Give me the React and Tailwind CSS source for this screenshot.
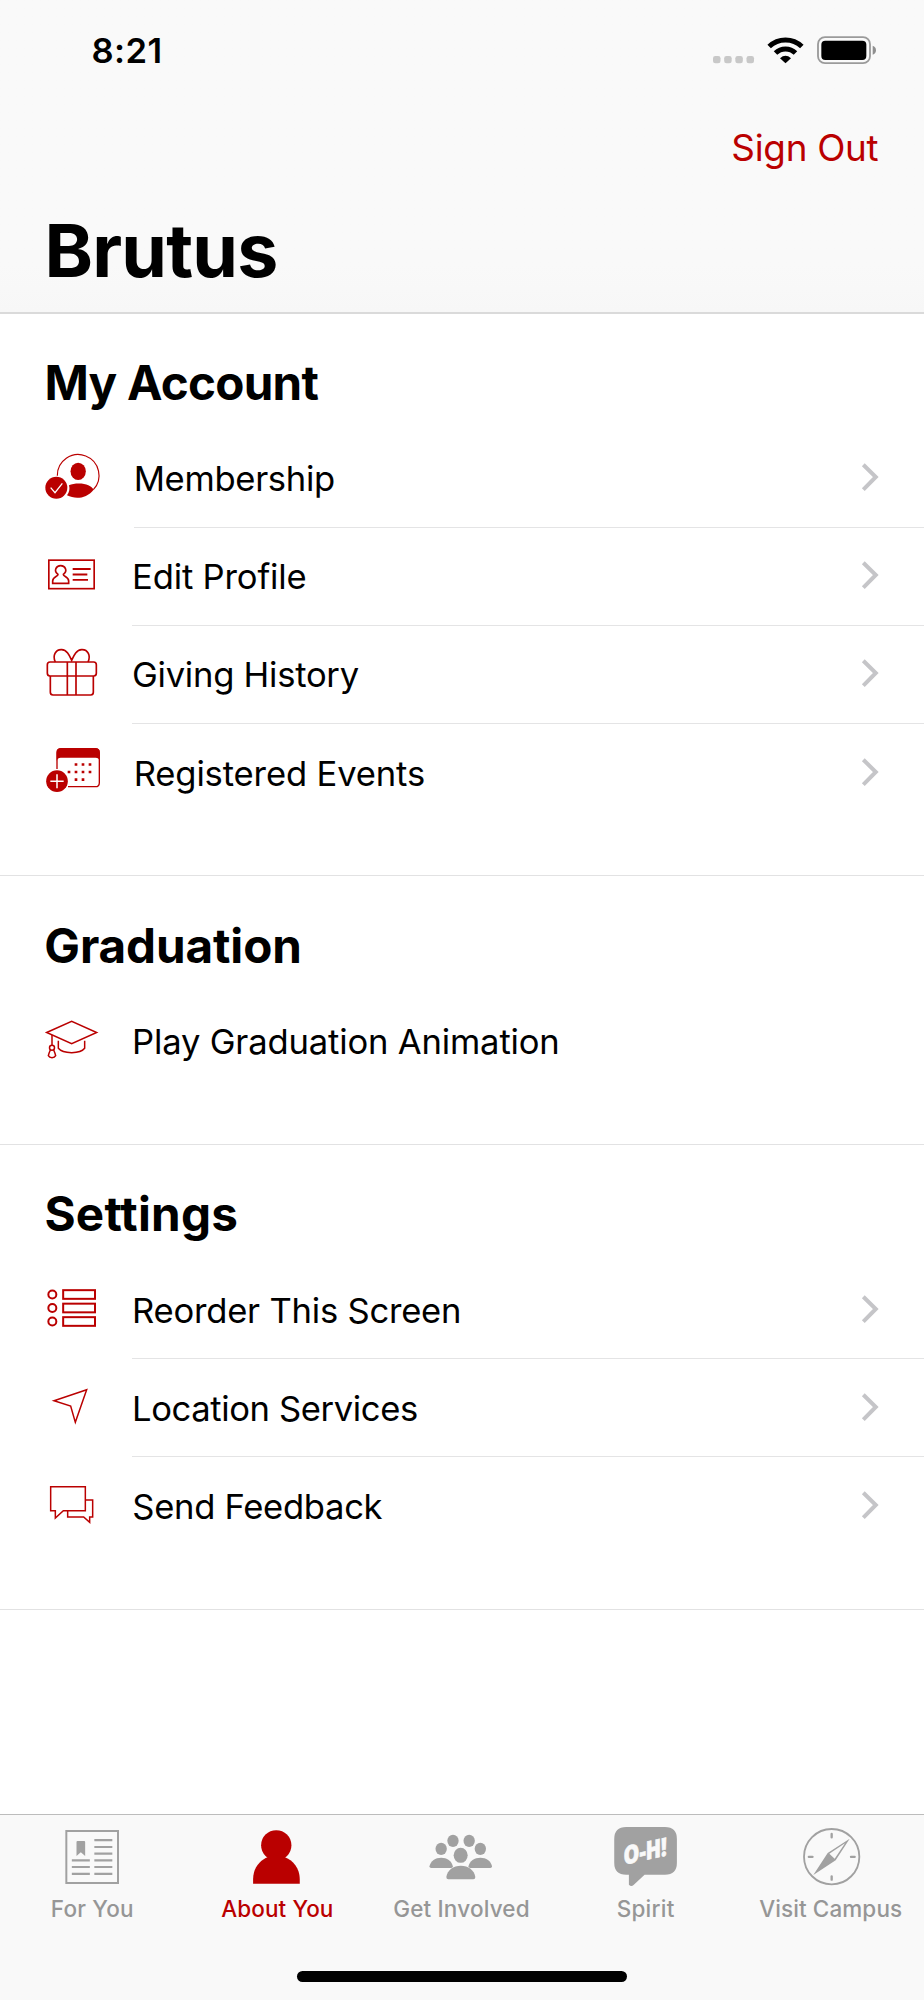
const RED = "#ba0000";
const GRAY = "#a1a1a1";

function RowIcon({ top, children }) {
  return (
    <svg
      className="mt-px ml-[40px] h-[66px] w-[70px] shrink-0"
      viewBox={`30 ${top} 210 198`}
      fill="none"
      stroke={RED}
      strokeWidth="4.500"
    >
      {children}
    </svg>
  );
}

const MembershipIcon = () => (
  <RowIcon top={18}>
    <path d="M82 107A62.500 62.500 0 1 1 190 149" strokeWidth="3.500" />
    <ellipse cx="144.500" cy="94" rx="23" ry="26" fill={RED} stroke="none" />
    <path d="M117 136c14-7 43-8 58 0 8 4 13 8 16 13-22 27-54 30-80 17 7-9 9-19 6-30Z" fill={RED} stroke="none" />
    <circle cx="79" cy="143.500" r="33" fill={RED} stroke="none" />
    <path d="M62 143l13 15 22-28" stroke="#fff" strokeWidth="4" />
  </RowIcon>
);

const ProfileIcon = () => (
  <RowIcon top={312}>
    <rect x="56.500" y="360.500" width="136" height="85.500" strokeWidth="5" />
    <path d="M84 403c1 7-16 7-16 20v7h48v-7c0-13-17-13-16-20 14-10 6-26-8-26s-22 16-8 26Z" strokeWidth="5" />
    <path d="M128 387h54M128 403.500h44M128 419.500h46" strokeWidth="5.500" />
  </RowIcon>
);

const GiftIcon = () => (
  <RowIcon top={37}>
    <g strokeWidth="5">
      <path d="M60 97h131q8 0 8 8v26q0 8-8 8H60q-8 0-8-8v-26q0-8 8-8Z" />
      <path d="M61 139v49q0 8 8 8h113q8 0 8-8v-49M112 97v99M138 97v99" />
      <path d="M76 97c-9-18 0-38 19-37 16 1 23 17 30 32 7-15 14-31 30-32 19-1 28 19 19 37" />
    </g>
  </RowIcon>
);

const EventsIcon = () => (
  <RowIcon top={332}>
    <path d="M81 419V370q0-12 12-12h103q12 0 12 12v90q0 12-12 12h-82" strokeWidth="4" />
    <path d="M80 394V370q0-13 13-13h103q13 0 13 13v24q-3-9-12-9H92q-9 0-12 9Z" fill={RED} stroke="none" />
    <path
      d="M134 405.500h8M155 405.500h8M176 405.500h8M113 428h8M134 428h8M155 428h8M176 428h8M134 451h8M155 451h8"
      strokeWidth="8"
    />
    <circle cx="81" cy="455.500" r="32.500" fill={RED} stroke="none" />
    <path d="M61 456h40M81 435v42" stroke="#fff" strokeWidth="4.500" />
  </RowIcon>
);

const GraduationIcon = () => (
  <RowIcon top={24}>
    <path d="M50 97.500L125 64l75 33.500L125 131Z" />
    <path d="M85 122v23c14 17 65 18 79 0v-23M66 105v31" />
    <circle cx="66" cy="143.500" r="7.500" />
    <path d="M61 150q-4 9-6 17c4 8 18 8 22 0q-2-8-6-17" />
  </RowIcon>
);

const ReorderIcon = () => (
  <RowIcon top={21}>
    <g strokeWidth="6">
      <circle cx="67" cy="73.500" r="12" />
      <circle cx="67" cy="114" r="12" />
      <circle cx="67" cy="154.500" r="12" />
      <rect x="99.500" y="60.500" width="95.500" height="26" />
      <rect x="99.500" y="101" width="95.500" height="26" />
      <rect x="99.500" y="141.500" width="95.500" height="26" />
    </g>
  </RowIcon>
);

const LocationIcon = () => (
  <RowIcon top={317}>
    <path d="M170 361L72 394l50 16 14 49Z" />
  </RowIcon>
);

const FeedbackIcon = () => (
  <RowIcon top={611}>
    <path d="M62 652h104v72h-66l-24 22v-22H62Z" />
    <path d="M166 692h22v51h-9v16l-18-16h-48v-19" />
  </RowIcon>
);

const ChevronIcon = ({ raised }) => (
  <svg
    className={`ml-auto mr-[44px] h-[30px] w-[20px] shrink-0 ${raised ? "mb-[2px]" : ""}`}
    viewBox="0 0 20 30"
    fill="none"
  >
    <path d="M3.300 1.700L15.800 14 3.300 26.600" stroke="#c5c5c8" strokeWidth="4" />
  </svg>
);

const SECTIONS = [
  {
    title: "My Account",
    size: "h-[562px]",
    pad: "pt-[39px]",
    spacing: "ml-[44.500px] tracking-[-0.75px]",
    rows: [
      { label: "Membership", Icon: MembershipIcon, spacing: "ml-[23.700px] tracking-[-0.31px]", chevron: true, raised: true },
      { label: "Edit Profile", Icon: ProfileIcon, spacing: "ml-[22px] tracking-[-0.15px]", chevron: true, raised: true },
      { label: "Giving History", Icon: GiftIcon, spacing: "ml-[22px] tracking-[-0.25px]", chevron: true, raised: true },
      { label: "Registered Events", Icon: EventsIcon, spacing: "ml-[23.700px] tracking-[-0.14px]", chevron: true },
    ],
  },
  {
    title: "Graduation",
    size: "h-[269px]",
    pad: "pt-[40px]",
    spacing: "ml-[44.300px] tracking-[-0.1px]",
    rows: [
      { label: "Play Graduation Animation", Icon: GraduationIcon, spacing: "ml-[22px] tracking-[-0.16px]" },
    ],
  },
  {
    title: "Settings",
    size: "h-[465px]",
    pad: "pt-[39px]",
    spacing: "ml-[44.500px] tracking-[0.2px]",
    rows: [
      { label: "Reorder This Screen", Icon: ReorderIcon, spacing: "ml-[22px] tracking-[-0.22px]", chevron: true },
      { label: "Location Services", Icon: LocationIcon, spacing: "ml-[22px] tracking-[-0.38px]", chevron: true },
      { label: "Send Feedback", Icon: FeedbackIcon, spacing: "ml-[22.300px] tracking-[-0.3px]", chevron: true },
    ],
  },
];

function Row({ row, divider }) {
  const { label, Icon, spacing, chevron, raised } = row;
  return (
    <li>
      <div className="flex h-[97px] items-center">
        <Icon />
        <span
          className={`whitespace-nowrap text-[34.6px] leading-[44px] ${raised ? "pb-[2px]" : ""} ${spacing}`}
        >
          {label}
        </span>
        {chevron && <ChevronIcon raised={raised} />}
      </div>
      <div className={`h-px ${divider}`} />
    </li>
  );
}

function dividerFor(rows, i) {
  if (i === rows.length - 1) return "";
  return rows[i].Icon === MembershipIcon ? "ml-[134px] bg-[#e4e4e5]" : "ml-[132px] bg-[#e4e4e5]";
}

function Section({ section }) {
  return (
    <section className={`border-b border-[#e2e2e3] ${section.size}`}>
      <div className={`h-[116px] ${section.pad}`}>
        <h2 className={`text-[47.6px] leading-[60px] font-bold ${section.spacing}`}>{section.title}</h2>
      </div>
      <ul>
        {section.rows.map((row, i) => (
          <Row key={row.label} row={row} divider={dividerFor(section.rows, i)} />
        ))}
      </ul>
    </section>
  );
}

const StatusIcons = () => (
  <svg className="h-[36px] w-[170px]" viewBox="740 96 510 108">
    <g fill="#c8c8c8">
      <rect x="752" y="168" width="22.500" height="22" rx="7" />
      <rect x="785.500" y="168" width="22.500" height="22" rx="7" />
      <rect x="819" y="168" width="22.500" height="22" rx="7" />
      <rect x="852.500" y="168" width="22.500" height="22" rx="7" />
    </g>
    <g fill="none" stroke="#000">
      <path d="M920.500 139.500A70.500 70.500 0 0 1 1018.500 139.500" strokeWidth="15" />
      <path d="M939.500 159A43 43 0 0 1 999.500 159" strokeWidth="15" />
    </g>
    <path d="M953 174.500Q969.500 160 986 174.500L969.500 190Z" />
    <rect x="1067" y="111.500" width="156" height="78" rx="21" fill="none" stroke="#9a9a9a" strokeWidth="5.500" />
    <rect x="1077" y="122.500" width="135" height="57.500" rx="12" />
    <path d="M1231 137.500q10 4 10 13.500t-10 13.500Z" fill="#8f8f8f" />
  </svg>
);

function TabIcon({ viewBox, children }) {
  return (
    <svg className="h-[72px] w-[80px]" viewBox={viewBox}>
      {children}
    </svg>
  );
}

const NewsIcon = () => (
  <TabIcon viewBox="157 60 240 216">
    <rect x="200" y="93" width="155" height="156" fill="none" stroke={GRAY} strokeWidth="6" />
    <path
      d="M284 120.500h54M284 141h54M284 161h54M284 181h54M284 201h54M284 221.500h54M216.500 181h54M216.500 201h54M216.500 221.500h54"
      stroke={GRAY}
      strokeWidth="6.500"
    />
    <path d="M230.500 126q0-3 3-3h20q3 0 3 3v42l-13-11-13 11Z" fill={GRAY} />
  </TabIcon>
);

const PersonIcon = () => (
  <TabIcon viewBox="710.700 60 240 216">
    <g fill={RED}>
      <circle cx="828.500" cy="136" r="45.500" />
      <path d="M804 171h49c26 10 46 34 46 66v14H759v-14c0-32 19-56 45-66Z" />
    </g>
  </TabIcon>
);

const GroupIcon = () => (
  <TabIcon viewBox="334.500 60 240 216">
    <g fill={GRAY}>
      <ellipse cx="430.500" cy="122.500" rx="17" ry="18.500" />
      <ellipse cx="479" cy="122.500" rx="17" ry="18.500" />
      <ellipse cx="395" cy="146.500" rx="17" ry="18.500" />
      <ellipse cx="512.500" cy="146.500" rx="17" ry="18.500" />
      <ellipse cx="453.500" cy="166" rx="21" ry="22.500" />
      <path d="M360 199c3-16 18-26 35-26s32 10 35 26q0 5-5 5h-60q-5 0-5-5Z" />
      <path d="M477 199c3-16 18-26 35.500-26s32 10 35 26q0 5-5 5h-60q-5.500 0-5.500-5Z" />
      <path
        d="M410.500 231c3-20 21-33.500 43.500-33.500s40 13.500 43.500 33.500q0 7-6 7h-75q-6 0-6-7Z"
      />
    </g>
  </TabIcon>
);

const SpiritIcon = () => (
  <TabIcon viewBox="-23.700 60 240 216">
    <path
      d="M37 81H153q36 0 36 36v71q0 36-36 36H92L59 255q-7 6-14-1V224H37Q1 224 1 188V117Q1 81 37 81Z"
      fill={GRAY}
    />
    <text
      transform="translate(29 195) skewY(-12.5)"
      fontSize="76"
      fontWeight="800"
      textLength="130"
      lengthAdjust="spacingAndGlyphs"
      fill="#f9f9f9"
      stroke="#f9f9f9"
      strokeWidth="2"
      className="font-['Open_Sans']"
    >
      O-H!
    </text>
  </TabIcon>
);

const CompassIcon = () => (
  <TabIcon viewBox="530 60 240 216">
    <circle cx="652" cy="170" r="83" fill="none" stroke={GRAY} strokeWidth="5.500" />
    <path
      d="M652 102v10M652 229v10M583.500 170.500h11M710 170.500h11"
      stroke={GRAY}
      strokeWidth="7"
      strokeLinecap="round"
    />
    <path
      fillRule="evenodd"
      d="M706 116L664 181 597 225 640 159ZM692 130L645 161 661 176Z"
      fill={GRAY}
    />
  </TabIcon>
);

const TABS = [
  { label: "For You", Icon: NewsIcon, spacing: "tracking-[0.21px] text-[#969696]" },
  { label: "About You", Icon: PersonIcon, spacing: "pl-px tracking-[0.07px] text-[#ba0000]" },
  { label: "Get Involved", Icon: GroupIcon, spacing: "tracking-[0.17px] text-[#969696]" },
  { label: "Spirit", Icon: SpiritIcon, spacing: "pr-px tracking-[0.25px] text-[#969696]" },
  { label: "Visit Campus", Icon: CompassIcon, spacing: "tracking-[0.1px] text-[#969696]" },
];

export default function App() {
  return (
    <div className="flex h-[2000px] w-[924px] flex-col overflow-hidden bg-white font-['Inter',sans-serif] text-black">
      <header className="h-[314px] shrink-0 border-b-2 border-[#dadada] bg-linear-to-b from-[#f9f9f9] from-85% to-[#f7f7f7]">
        <div className="flex h-[100px] items-center justify-between pr-[45.3px] pl-[91.500px]">
          <span className="text-[34.6px] leading-[44px] font-semibold tracking-[0.43px]">8:21</span>
          <StatusIcons />
        </div>
        <div className="flex h-[96px] items-center pl-[731.300px]">
          <button className="text-[36.8px] leading-[46px] whitespace-nowrap tracking-[-0.25px] text-[#ba0000]">
            Sign Out
          </button>
        </div>
        <h1 className="pt-px pl-[44.500px] text-[73.4px] leading-[108px] font-bold tracking-[-0.8px]">Brutus</h1>
      </header>

      <main className="flex-1">
        {SECTIONS.map((section) => (
          <Section key={section.title} section={section} />
        ))}
      </main>

      <footer className="flex h-[186px] shrink-0 flex-col border-t border-[#bcbcbc] bg-[#f9f9f9] pt-[5px]">
        <nav className="grid w-[923px] grid-cols-5">
          {TABS.map(({ label, Icon, spacing }) => (
            <a key={label} className="flex flex-col items-center">
              <Icon />
              <span className={`mt-[2px] text-[22.5px] leading-[30px] font-medium whitespace-nowrap ${spacing}`}>
                {label}
              </span>
            </a>
          ))}
        </nav>
        <div className="mx-auto mt-auto mb-[18px] h-[11px] w-[330px] rounded-full bg-black" />
      </footer>
    </div>
  );
}
